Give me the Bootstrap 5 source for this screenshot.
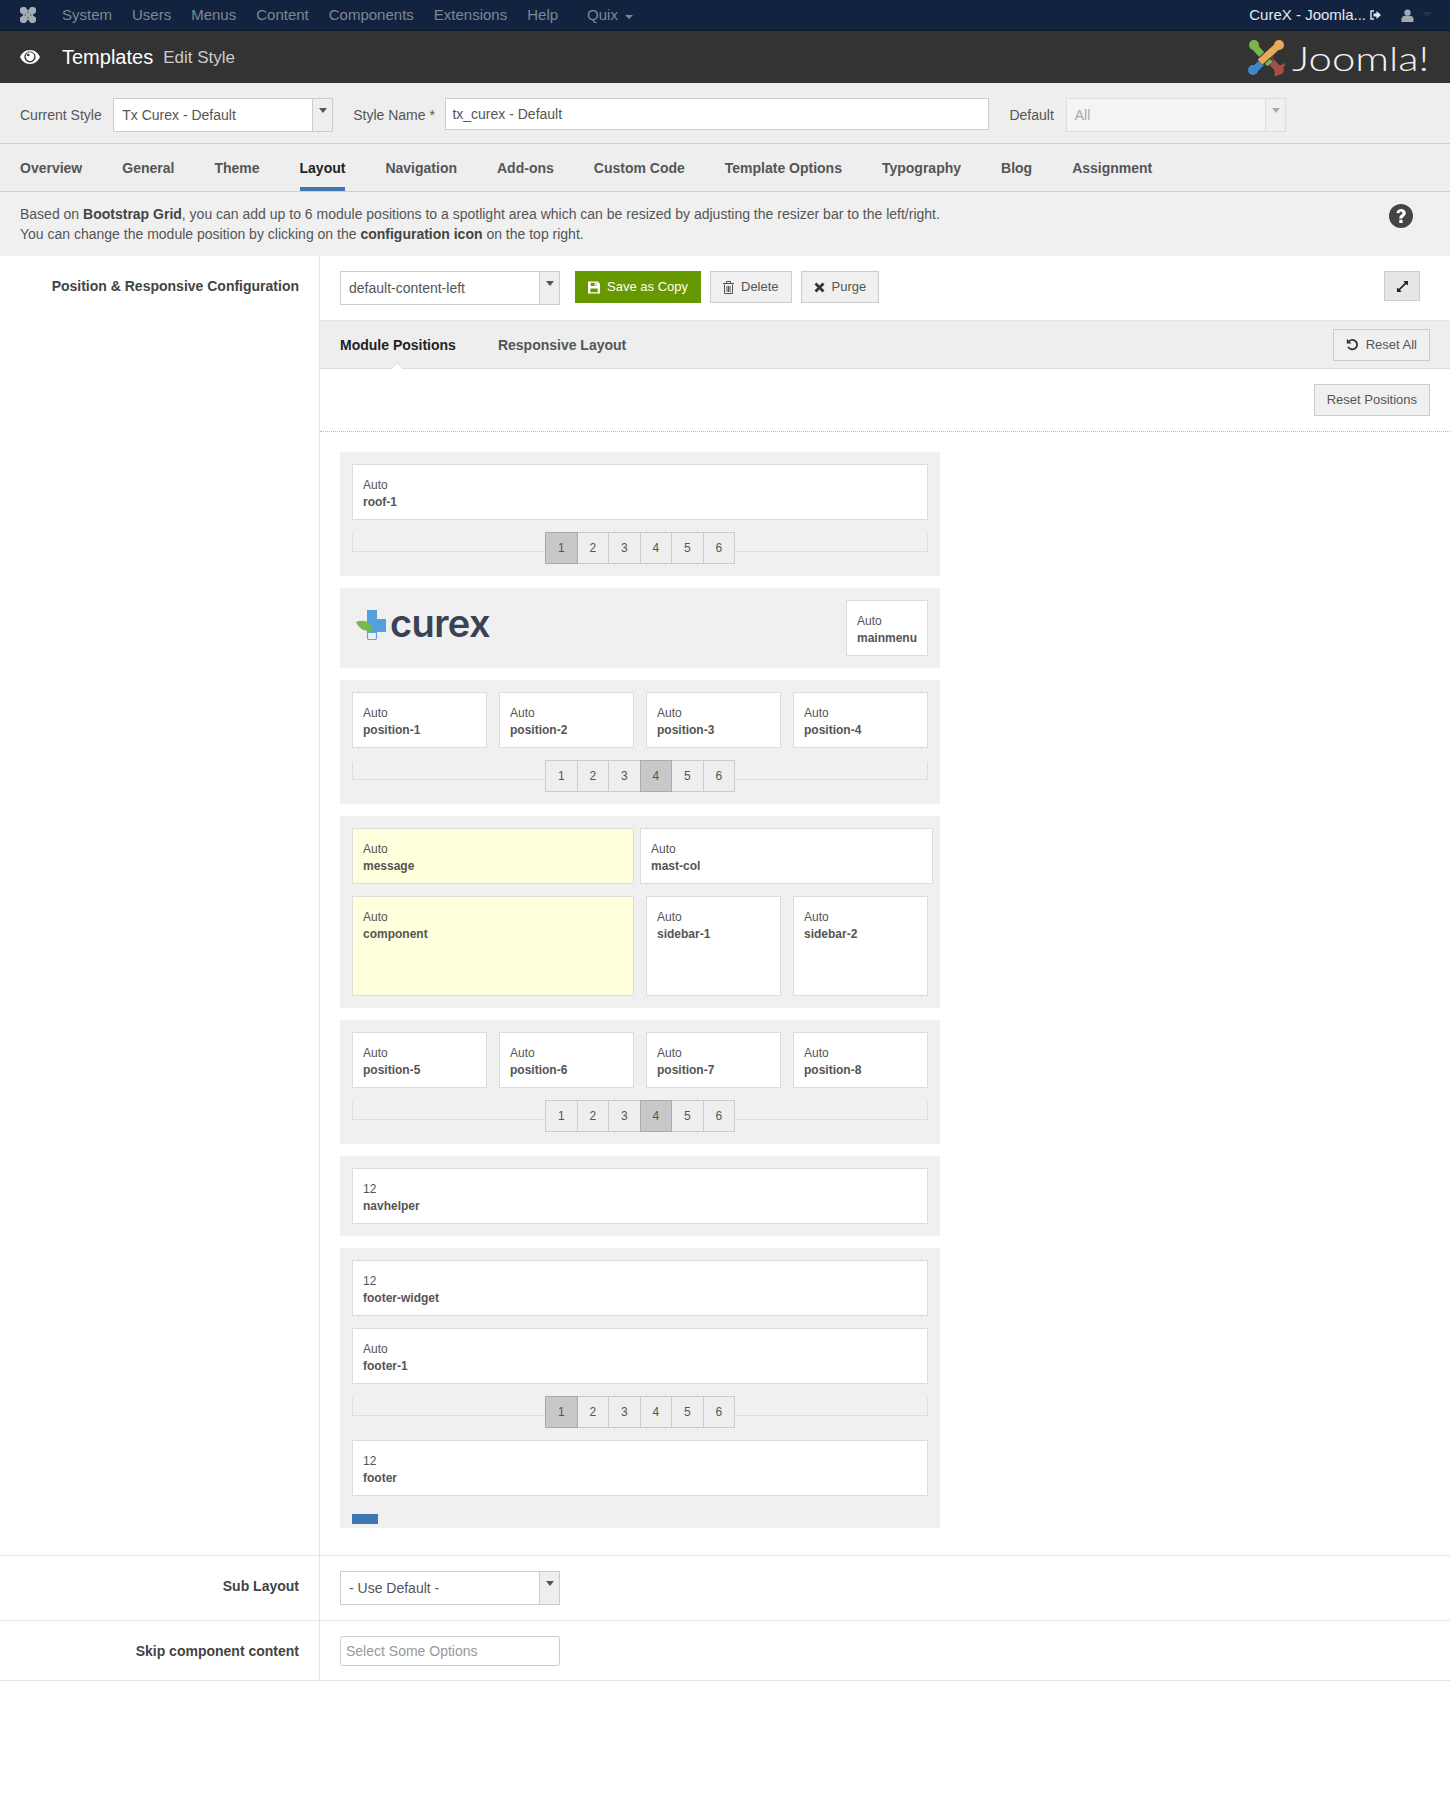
<!DOCTYPE html>
<html lang="en">
<head>
<meta charset="utf-8">
<title>Templates: Edit Style</title>
<link href="https://cdn.jsdelivr.net/npm/bootstrap@5.3.0/dist/css/bootstrap.min.css" rel="stylesheet">
<style>
body{font-family:"Liberation Sans",Arial,sans-serif;font-size:14px;color:#555;background:#fff;min-height:1801px}
.jx-top{height:31px;background:#12233f;border-bottom:1px solid #0b1626;padding:0 18px 0 19px}
.jx-top a{color:#7d8796;text-decoration:none;padding:0;font-size:15px}
.jx-menu{gap:20px;margin-left:25px}
.jx-quix{margin-left:9px;gap:7px}
.jx-site{color:#e4e9f0;font-size:15px}
.jx-usr{margin-left:20px}
.jx-head{height:52px;background:#333;padding:0 20px}
.jx-title{color:#fff;font-size:20px;margin:0 0 0 22px;font-weight:400}
.jx-sub{color:#ccc;font-size:17px;margin-left:10px;position:relative;top:1px}
.jx-brand{display:block;width:138px;margin:3px 0 0 7px;color:#f2f2f2;font-family:Lato,"Liberation Sans",sans-serif;font-weight:300;font-size:33px;line-height:1;transform:scaleX(1.27);transform-origin:left center;white-space:nowrap}
.jx-bar{height:61px;background:#eee;border-bottom:1px solid #d0d0d0;padding:15px 20px 0}
.jx-lab{line-height:34px;white-space:nowrap;margin-right:11.500px}
.jx-lab2{margin-left:20px;margin-right:10.500px}
.jx-lab3{margin-left:20px;margin-right:12px}
.jx-sel{width:220px;height:34px;border:1px solid #ccc;background:#fff;line-height:32px;padding-left:8px;position:relative;color:#555;flex:none}
.jx-sel::after{content:"";position:absolute;right:0;top:0;bottom:0;width:20px;background:#eee;border-left:1px solid #ccc}
.jx-sel::before{content:"";position:absolute;z-index:1;right:5px;top:9px;border:4.500px solid transparent;border-top:5px solid #555;border-bottom:0}
.jx-sel.jx-off{background:#f4f4f4;color:#aaa;border-color:#ddd}
.jx-sel.jx-off::before{border-top-color:#aaa}
.jx-sel.jx-off::after{border-color:#ddd;background:#f0f0f0}
.jx-name{width:544px;height:32px;border:1px solid #ccc;background:#fff;padding:0 6px;font-size:14px;color:#555;border-radius:0}
.jx-tabs{height:48px;background:#eee;border-bottom:1px solid #d0d0d0;padding:0 20px;gap:40px}
.jx-tab{font-weight:700;color:#555;line-height:49px;height:47px;text-decoration:none;white-space:nowrap}
.jx-tab.jx-on{color:#222;box-shadow:inset 0 -4px 0 #3f77b5}
.jx-desc{height:64px;background:#f0f0f0;padding:12px 20px 0;line-height:20px}
.jx-desc b{color:#444}
.jx-help{margin:0 17px 0 0}
.jx-left{width:320px;flex:none;border-right:1px solid #e4e4e4;padding-right:20px;text-align:right;font-weight:700;color:#444}
.jx-pos{padding-top:20px;line-height:20px}
.jx-right{flex:1;min-width:0}
.jx-tools{padding:15px 30px 15px 20px;height:64px;gap:9px}
.jx-btn{height:32px;border:1px solid #ccc;border-radius:0;background:#f0f0f0;color:#555;font-size:13px;padding:0 12px;display:inline-flex;align-items:center;gap:7px;white-space:nowrap;--bs-btn-font-size:13px}
.jx-save{background:#669900;border-color:#669900;color:#fff;margin:0 0 0 6px;width:126px;justify-content:center}
.jx-exp{background:#e6e6e6;width:36px;height:30px;justify-content:center;padding:0}
.jx-sect{height:49px;background:#eee;border-top:1px solid #e6e6e6;border-bottom:1px solid #ddd;padding:0 20px;position:relative}
.jx-sect a{font-weight:700;color:#555;text-decoration:none;position:relative;top:1px}
.jx-sect a.jx-on{color:#222;margin-right:42px}
.jx-notch{position:absolute;left:71px;bottom:-1px;width:12px;height:6px;overflow:hidden}
.jx-resets{height:63px;border-bottom:1px dotted #bbb;padding:15px 20px 0 0;margin-bottom:20px}
.jx-area{width:600px;margin-left:20px;padding-bottom:27px}
.jx-blk{background:#f0f0f0;padding:12px;margin-bottom:12px}
.jx-blk:last-child{margin-bottom:0}
.jx-mod{height:56px;background:#fff;border:1px solid #ddd;padding:12px 10px;font-size:12px;line-height:17px;color:#555;min-width:0}
.jx-mod b{display:block;color:#555}
.jx-mod.jx-tall{height:100px}
.jx-mod.jx-main{background:#ffffdd}
.jx-row{display:flex;gap:12px;margin-bottom:12px}
.jx-row.jx-g6{gap:6px}
.jx-row > .jx-mod{flex:1}
.jx-row:last-child{margin-bottom:0}
.jx-w282{flex:none!important;width:282px}
.jx-w293{flex:none!important;width:293px}
.jx-sld{display:flex;height:32px;margin-bottom:12px}
.jx-sld:last-child{margin-bottom:0}
.jx-line{flex:1;height:18px;margin-top:2px;border-bottom:1px solid #ddd}
.jx-line.jx-l{border-left:1px solid #ddd}
.jx-line.jx-r{border-right:1px solid #ddd}
.jx-gr{display:flex}
.jx-num{width:32.500px;height:32px;margin-left:-1px;border:1px solid #ccc;background:#eee;text-align:center;line-height:30px;font-size:12px;color:#555}
.jx-num:first-child{margin-left:0}
.jx-num.jx-act{background:#c8c8c8;border-color:#aaa;position:relative}
.jx-logo{height:56px;padding-left:4px}
.jx-cross{margin-top:-6px}
.jx-curex{font-family:Inter,"Open Sans",sans-serif;font-weight:600;font-size:38px;letter-spacing:-.6px;color:#3a4256;line-height:1;margin:-11px 0 0 4px}
.jx-blue{width:26px;height:10px;background:#3f77b5;margin:18px 0 -8px}
.jx-frow{border-top:1px solid #e4e4e4}
.jx-frow .jx-left{line-height:20px;padding-top:20px}
.jx-frow .jx-right{padding:15px 0 15px 20px}
.jx-frow.jx-last{border-bottom:1px solid #e4e4e4}
.jx-frow.jx-last .jx-right{padding:15px 0 14px 20px}
.jx-opt{width:220px;height:30px;border:1px solid #ccc;border-radius:3px;padding:0 5px;font-size:14px;color:#555;background:#fff}
.jx-opt::placeholder{color:#999;opacity:1}
</style>
</head>
<body>
<nav class="jx-top d-flex align-items-center justify-content-between">
  <div class="d-flex align-items-center">
    <svg width="18" height="18" viewBox="0 0 18 18" aria-hidden="true"><rect x="1" y="1" width="16" height="16" rx="3" fill="#a8adb5"/><path d="M5.500 0H12.500L9 4.500zM5.500 18H12.500L9 13.500zM0 5.500V12.500L4.500 9zM18 5.500V12.500L13.500 9z" fill="#12233f"/><path d="M7.500 5.800L9 7.300 10.500 5.800zM7.500 12.200L9 10.700 10.500 12.200zM5.800 7.500L7.300 9 5.800 10.500zM12.200 7.500L10.700 9 12.200 10.500z" fill="#5b6474"/></svg>
    <div class="nav jx-menu">
      <a class="nav-link" href="#">System</a><a class="nav-link" href="#">Users</a><a class="nav-link" href="#">Menus</a><a class="nav-link" href="#">Content</a><a class="nav-link" href="#">Components</a><a class="nav-link" href="#">Extensions</a><a class="nav-link" href="#">Help</a>
      <a class="nav-link jx-quix d-flex align-items-center" href="#">Quix <svg width="8" height="5" viewBox="0 0 8 5" class="mt-1"><path d="M0 0h8L4 4z" fill="#7d8796"/></svg></a>
    </div>
  </div>
  <div class="d-flex align-items-center">
    <span class="jx-site">CureX - Joomla...</span>
    <svg class="ms-1" width="11" height="10" viewBox="0 0 11 10"><path d="M4 1H1v8h3" fill="none" stroke="#e4e9f0" stroke-width="1.400"/><path d="M3.500 3.500H6.500V1L11 5 6.500 9V6.500H3.500z" fill="#e4e9f0"/></svg>
    <svg class="jx-usr" width="13" height="13" viewBox="0 0 13 13"><circle cx="6.500" cy="3.600" r="3.200" fill="#a5a9b0"/><path d="M0.500 13V9.500Q1 7 4 6.800H9Q12 7 12.500 9.500V13z" fill="#a5a9b0"/></svg>
    <svg class="ms-2" width="10" height="6" viewBox="0 0 10 6"><path d="M0 0h10L5 5z" fill="#27344a"/></svg>
  </div>
</nav>

<header class="jx-head d-flex align-items-center justify-content-between">
  <div class="d-flex align-items-center">
    <svg width="20" height="14" viewBox="0 0 20 14"><path fill="#fff" fill-rule="evenodd" d="M10 0C5 0 1.500 3.500 0 7c1.500 3.500 5 7 10 7s8.500-3.500 10-7c-1.500-3.500-5-7-10-7zM10 1.600C13 1.600 15.600 4 15.600 7S13 12.400 10 12.400 4.400 10 4.400 7 7 1.600 10 1.600z"/><circle cx="10" cy="6.600" r="4.300" fill="#fff"/><circle cx="8.300" cy="5" r="1.300" fill="#333"/></svg>
    <h1 class="jx-title">Templates</h1><span class="jx-sub">Edit Style</span>
  </div>
  <div class="d-flex align-items-center">
    <svg width="37" height="37" viewBox="0 0 37 37" aria-hidden="true">
      <path d="M31 31L20 19" stroke="#333" stroke-width="9" fill="none"/><path d="M31 31L16 15" stroke="#a24f4a" stroke-width="7" fill="none"/><circle cx="31" cy="31" r="5" fill="#a24f4a"/><path d="M27 37L36 25" stroke="#a24f4a" stroke-width="3"/>
      <path d="M6 31L24 14" stroke="#333" stroke-width="9" fill="none"/><path d="M6 31L24 14" stroke="#3f88cf" stroke-width="7" fill="none"/><circle cx="5" cy="31" r="5" fill="#3f88cf"/>
      <path d="M6 7L22 25" stroke="#333" stroke-width="9" fill="none"/><path d="M6 7L22 25" stroke="#7ab648" stroke-width="7" fill="none"/><circle cx="6" cy="6" r="5" fill="#7ab648"/>
      <path d="M31 6L12 23" stroke="#333" stroke-width="9" fill="none"/><path d="M31 6L12 23" stroke="#e8a95b" stroke-width="7" fill="none"/><circle cx="31" cy="6" r="5" fill="#e8a95b"/>
    </svg>
    <span class="jx-brand">Joomla!</span>
  </div>
</header>

<div class="jx-bar d-flex">
  <span class="jx-lab">Current Style</span>
  <div class="jx-sel">Tx Curex - Default</div>
  <span class="jx-lab jx-lab2">Style Name *</span>
  <input class="jx-name" type="text" value="tx_curex - Default">
  <span class="jx-lab jx-lab3">Default</span>
  <div class="jx-sel jx-off">All</div>
</div>

<div class="jx-tabs d-flex">
  <a class="jx-tab" href="#">Overview</a><a class="jx-tab" href="#">General</a><a class="jx-tab" href="#">Theme</a><a class="jx-tab jx-on" href="#">Layout</a><a class="jx-tab" href="#">Navigation</a><a class="jx-tab" href="#">Add-ons</a><a class="jx-tab" href="#">Custom Code</a><a class="jx-tab" href="#">Template Options</a><a class="jx-tab" href="#">Typography</a><a class="jx-tab" href="#">Blog</a><a class="jx-tab" href="#">Assignment</a>
</div>

<div class="jx-desc d-flex justify-content-between">
  <div>Based on <b>Bootstrap Grid</b>, you can add up to 6 module positions to a spotlight area which can be resized by adjusting the resizer bar to the left/right.<br>You can change the module position by clicking on the <b>configuration icon</b> on the top right.</div>
  <svg class="jx-help" width="24" height="24" viewBox="0 0 24 24"><circle cx="12" cy="12" r="12" fill="#444"/><path d="M7.500 9C7.800 6 10 5 12 5c3 0 4.800 1.700 4.800 4 0 3.200-3.300 3.400-3.300 5.500h-3.200c0-3.700 3.200-3.800 3.200-5.500 0-.9-.7-1.300-1.500-1.300-1 0-1.500.6-1.700 1.500zM10.300 15.800h3.200V19h-3.200z" fill="#fff"/></svg>
</div>

<div class="d-flex">
  <div class="jx-left jx-pos">Position &amp; Responsive Configuration</div>
  <div class="jx-right">
    <div class="jx-tools d-flex">
      <div class="jx-sel">default-content-left</div>
      <button class="btn jx-btn jx-save" type="button"><svg width="13" height="13" viewBox="0 0 13 13"><path fill="#fff" fill-rule="evenodd" d="M0 0h10.500L13 2.500V13H0zM3 1.500V5h6V1.500zM7 2h1.500v2.500H7zM2.500 7.500V11.500h8V7.500z"/></svg>Save as Copy</button>
      <button class="btn jx-btn" type="button"><svg width="11" height="13" viewBox="0 0 11 13"><path fill="none" stroke="#555" stroke-width="1" d="M1.500 3.500V12.500H9.500V3.500M0 2.500H11M3.500 2.500V.5H7.500V2.500M4 5V11M5.500 5V11M7 5V11"/></svg>Delete</button>
      <button class="btn jx-btn" type="button"><svg width="11" height="11" viewBox="0 0 11 11"><path d="M1.500 1.500L9.500 9.500M9.500 1.500L1.500 9.500" stroke="#333" stroke-width="2.800"/></svg>Purge</button>
      <button class="btn jx-btn jx-exp ms-auto" type="button"><svg width="11" height="11" viewBox="0 0 11 11"><path d="M6.500 0H11V4.500L9.200 2.900 3 9 4.500 11H0V6.500L1.700 8 7.900 1.700z" fill="#222"/></svg></button>
    </div>
    <div class="jx-sect d-flex align-items-center">
      <a class="jx-on" href="#">Module Positions</a><a href="#">Responsive Layout</a>
      <svg class="jx-notch" viewBox="0 0 12 6"><path d="M0 6L6 0L12 6" fill="#fff" stroke="#ddd"/></svg>
      <button class="btn jx-btn ms-auto" type="button"><svg width="13" height="13" viewBox="0 0 13 13"><path d="M3 3.300A4.700 4.700 0 1 1 2.200 8.800" fill="none" stroke="#333" stroke-width="1.800"/><path d="M.8 .8V5.500H5.500z" fill="#333"/></svg>Reset All</button>
    </div>
    <div class="jx-resets d-flex justify-content-end">
      <button class="btn jx-btn" type="button">Reset Positions</button>
    </div>
    <div class="jx-area">
      <div class="jx-blk">
        <div class="jx-row"><div class="jx-mod">Auto<b>roof-1</b></div></div>
        <div class="jx-sld"><div class="jx-line jx-l"></div><div class="jx-gr"><div class="jx-num jx-act">1</div><div class="jx-num">2</div><div class="jx-num">3</div><div class="jx-num">4</div><div class="jx-num">5</div><div class="jx-num">6</div></div><div class="jx-line jx-r"></div></div>
      </div>
      <div class="jx-blk">
        <div class="jx-logo d-flex align-items-center justify-content-between">
          <div class="d-flex align-items-center">
            <svg class="jx-cross" width="30" height="30" viewBox="0 0 30 30" aria-hidden="true"><path d="M11 0H21V9H30V22H21V23H11z" fill="#559fdf"/><path d="M11.500 22.500H20.500V28Q20.500 29.500 19 29.500H13Q11.500 29.500 11.500 28z" fill="#f0f0f0" stroke="#5aa7e6" stroke-width="1.200"/><path d="M0 12C7 9 15 11 17 21 9 22 3 19 0 12z" fill="#74b84f"/></svg>
            <span class="jx-curex">curex</span>
          </div>
          <div class="jx-mod">Auto<b>mainmenu</b></div>
        </div>
      </div>
      <div class="jx-blk">
        <div class="jx-row"><div class="jx-mod">Auto<b>position-1</b></div><div class="jx-mod">Auto<b>position-2</b></div><div class="jx-mod">Auto<b>position-3</b></div><div class="jx-mod">Auto<b>position-4</b></div></div>
        <div class="jx-sld"><div class="jx-line jx-l"></div><div class="jx-gr"><div class="jx-num">1</div><div class="jx-num">2</div><div class="jx-num">3</div><div class="jx-num jx-act">4</div><div class="jx-num">5</div><div class="jx-num">6</div></div><div class="jx-line jx-r"></div></div>
      </div>
      <div class="jx-blk">
        <div class="jx-row jx-g6"><div class="jx-mod jx-main jx-w282">Auto<b>message</b></div><div class="jx-mod jx-w293">Auto<b>mast-col</b></div></div>
        <div class="jx-row"><div class="jx-mod jx-main jx-tall jx-w282">Auto<b>component</b></div><div class="jx-mod jx-tall">Auto<b>sidebar-1</b></div><div class="jx-mod jx-tall">Auto<b>sidebar-2</b></div></div>
      </div>
      <div class="jx-blk">
        <div class="jx-row"><div class="jx-mod">Auto<b>position-5</b></div><div class="jx-mod">Auto<b>position-6</b></div><div class="jx-mod">Auto<b>position-7</b></div><div class="jx-mod">Auto<b>position-8</b></div></div>
        <div class="jx-sld"><div class="jx-line jx-l"></div><div class="jx-gr"><div class="jx-num">1</div><div class="jx-num">2</div><div class="jx-num">3</div><div class="jx-num jx-act">4</div><div class="jx-num">5</div><div class="jx-num">6</div></div><div class="jx-line jx-r"></div></div>
      </div>
      <div class="jx-blk">
        <div class="jx-row"><div class="jx-mod">12<b>navhelper</b></div></div>
      </div>
      <div class="jx-blk">
        <div class="jx-row"><div class="jx-mod">12<b>footer-widget</b></div></div>
        <div class="jx-row"><div class="jx-mod">Auto<b>footer-1</b></div></div>
        <div class="jx-sld"><div class="jx-line jx-l"></div><div class="jx-gr"><div class="jx-num jx-act">1</div><div class="jx-num">2</div><div class="jx-num">3</div><div class="jx-num">4</div><div class="jx-num">5</div><div class="jx-num">6</div></div><div class="jx-line jx-r"></div></div>
        <div class="jx-row"><div class="jx-mod">12<b>footer</b></div></div>
        <div class="jx-blue"></div>
      </div>
    </div>
  </div>
</div>

<div class="jx-frow d-flex">
  <div class="jx-left">Sub Layout</div>
  <div class="jx-right"><div class="jx-sel">- Use Default -</div></div>
</div>
<div class="jx-frow jx-last d-flex">
  <div class="jx-left">Skip component content</div>
  <div class="jx-right"><input class="jx-opt" type="text" placeholder="Select Some Options"></div>
</div>
</body>
</html>
